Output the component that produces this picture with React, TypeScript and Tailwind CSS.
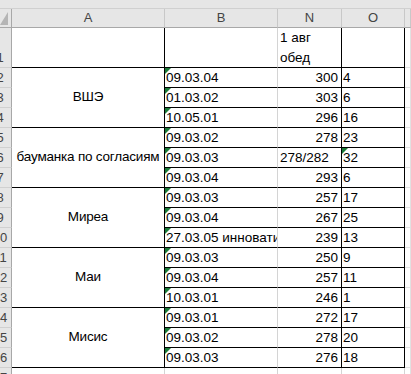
import React from "react";

const GROUPS = [
  {
    name: "ВШЭ",
    rows: [
      { b: "09.03.04", n: "300", o: "4" },
      { b: "01.03.02", n: "303", o: "6" },
      { b: "10.05.01", n: "296", o: "16" },
    ],
  },
  {
    name: "бауманка по согласиям",
    rows: [
      { b: "09.03.02", n: "278", o: "23" },
      { b: "09.03.03", n: "278/282", o: "32", text: true },
      { b: "09.03.04", n: "293", o: "6" },
    ],
  },
  {
    name: "Миреа",
    rows: [
      { b: "09.03.03", n: "257", o: "17" },
      { b: "09.03.04", n: "267", o: "25" },
      { b: "27.03.05 инноватика", n: "239", o: "13" },
    ],
  },
  {
    name: "Маи",
    rows: [
      { b: "09.03.03", n: "250", o: "9" },
      { b: "09.03.04", n: "257", o: "11" },
      { b: "10.03.01", n: "246", o: "1" },
    ],
  },
  {
    name: "Мисис",
    rows: [
      { b: "09.03.01", n: "272", o: "17" },
      { b: "09.03.02", n: "278", o: "20" },
      { b: "09.03.03", n: "276", o: "18" },
    ],
  },
];

function Flag() {
  return (
    <svg className="absolute left-0 top-0" width="6" height="6" viewBox="0 0 6 6">
      <polygon points="0,0 6,0 0,6" fill="#1a7a38" />
    </svg>
  );
}

function RowNum({ n }: { n: number }) {
  return (
    <div className="flex items-end overflow-hidden border-b border-r border-b-[#d0d0d0] border-r-[#a8a8a8] bg-[#e6e6e6]">
      <div className="ml-[-12px] w-[24px] shrink-0 text-center text-[13px] leading-[19px] text-[#444]">
        {n}
      </div>
    </div>
  );
}

const cellText = "overflow-hidden whitespace-nowrap text-[13.5px] leading-[20px] text-black";

export default function App() {
  let rowNo = 1;

  return (
    <div
      className="h-[374px] w-[411px] overflow-hidden bg-white"
      style={{ fontFamily: '"Liberation Sans", Arial, sans-serif' }}
    >
      <div className="h-[9px] border-b border-b-[#d0d0d0] bg-[#e6e6e6]" />
      <div className="grid grid-cols-[12px_153px_113px_64px_63px_1fr] grid-rows-[19px_40px_repeat(16,20px)]">
        {/* column headers */}
        <div className="relative border-b border-r border-b-[#a8a8a8] border-r-[#a8a8a8] bg-[#e6e6e6]">
          <svg className="absolute bottom-[2px] left-0" width="8" height="13" viewBox="0 0 8 13">
            <polygon points="8,0 8,13 0,13" fill="#b5b5b5" />
          </svg>
        </div>
        {["A", "B", "N", "O", ""].map((c, i) => (
          <div
            key={i}
            className="flex items-center justify-center border-b border-r border-b-[#a8a8a8] border-r-[#c8c8c8] bg-[#e6e6e6] text-[13px] text-[#444]"
          >
            {c}
          </div>
        ))}

        {/* row 1 */}
        <RowNum n={rowNo++} />
        <div className="border-b border-r border-black" />
        <div className="border-b border-r border-b-black border-r-[#d4d4d4]" />
        <div className={`border-b border-r border-black px-[2px] ${cellText} whitespace-normal`}>
          1 авг
          <br />
          обед
        </div>
        <div className="border-b border-r border-black" />
        <div className="border-b border-r border-[#e1e1e1]" />

        {GROUPS.map((g) =>
          g.rows.map((r, i) => (
            <React.Fragment key={`${g.name}-${i}`}>
              <RowNum n={rowNo++} />
              {i === 0 ? (
                <div className="row-span-3 flex items-center justify-center whitespace-nowrap border-b border-r border-black text-[13.5px] tracking-[-0.2px] text-black">
                  {g.name}
                </div>
              ) : null}
              <div className={`relative border-b border-r border-b-black border-r-[#d4d4d4] pl-[1px] ${cellText}`}>
                <Flag />
                {r.b}
              </div>
              <div
                className={`border-b border-r border-black px-[3px] ${cellText} ${
                  r.text ? "text-left pl-[2px]" : "text-right"
                }`}
              >
                {r.n}
              </div>
              <div className={`relative border-b border-r border-black px-[1px] ${cellText}`}>
                {r.text ? <Flag /> : null}
                {r.o}
              </div>
              <div className="border-b border-r border-[#e1e1e1]" />
            </React.Fragment>
          ))
        )}

        {/* row 17 */}
        <RowNum n={rowNo++} />
        <div className="border-b border-r border-[#d4d4d4]" />
        <div className="border-b border-r border-[#d4d4d4]" />
        <div className="border-b border-r border-[#d4d4d4]" />
        <div className="border-b border-r border-[#d4d4d4]" />
        <div className="border-b border-r border-[#e1e1e1]" />
      </div>
    </div>
  );
}
